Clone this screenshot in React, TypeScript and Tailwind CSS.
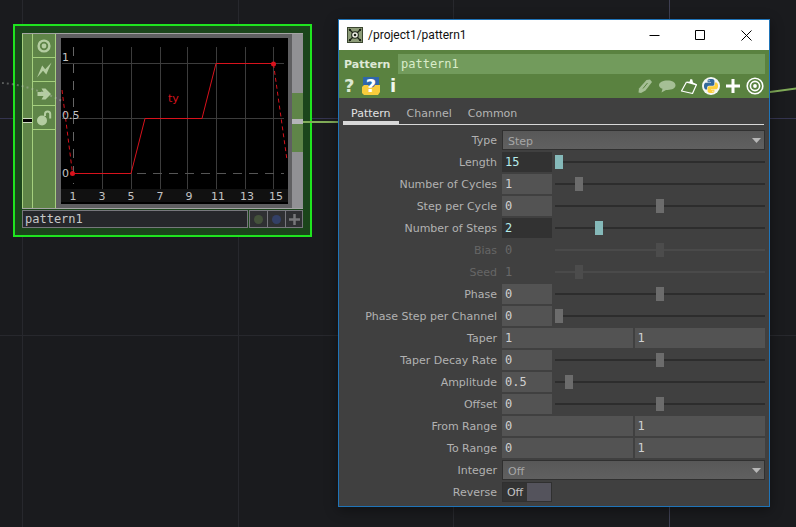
import React, { useState } from "react";

const PYTHON_HALF =
  "M14.25.18l.9.2.73.26.59.3.45.32.34.34.25.34.16.33.1.3.04.26.02.2-.01.13V8.5l-.05.63-.13.55-.21.46-.26.38-.3.31-.33.25-.35.19-.35.14-.33.1-.3.07-.26.04-.21.02H8.77l-.69.05-.59.14-.5.22-.41.27-.33.32-.27.35-.2.36-.15.37-.1.35-.07.32-.04.27-.02.21v3.06H3.17l-.21-.03-.28-.07-.32-.12-.35-.18-.36-.26-.36-.36-.35-.46-.32-.59-.28-.73-.21-.88-.14-1.05-.05-1.23.06-1.22.16-1.04.24-.87.32-.71.36-.57.4-.44.42-.33.42-.24.4-.16.36-.1.32-.05.24-.01h.16l.06.01h8.16v-.83H6.18l-.01-2.75-.02-.37.05-.34.11-.31.17-.28.25-.26.31-.23.38-.2.44-.18.51-.15.58-.12.64-.1.71-.06.77-.04.84-.02 1.27.05zm-6.3 1.98l-.23.33-.08.41.08.41.23.34.33.22.41.09.41-.09.33-.22.23-.34.08-.41-.08-.41-.23-.33-.33-.22-.41-.09-.41.09z";

const sans = "font-['DejaVu_Sans',sans-serif]";
const mono = "font-['DejaVu_Sans_Mono',monospace]";

/* ---------- network canvas ---------- */

function Grid() {
  return (
    <svg className="absolute inset-0 h-full w-full" aria-hidden="true">
      <g fill="#27282d">
        <rect x="22" y="0" width="1" height="100%" />
        <rect x="238" y="0" width="1" height="100%" />
        <rect x="453" y="0" width="1" height="100%" />
        <rect x="0" y="335" width="100%" height="1" />
      </g>
      <rect x="669" y="0" width="1" height="100%" fill="#3e3f52" />
      <rect x="0" y="118" width="100%" height="1" fill="#34344f" />
    </svg>
  );
}

function Wires() {
  return (
    <svg className="pointer-events-none absolute inset-0 h-full w-full" aria-hidden="true" fill="none">
      <path d="M2 83C20 84 42 91 62 101" stroke="#b9bdb9" strokeOpacity=".4" strokeWidth="2" strokeDasharray="2 3" />
      <path d="M303 122H560C640 122 700 104 770 92L800 88" stroke="#80ab58" strokeWidth="2" />
    </svg>
  );
}

const xTicks = [1, 3, 5, 7, 9, 11, 13, 15];

function Chart() {
  return (
    <svg width="227" height="166" viewBox="61 38 227 166" className="block shrink-0" role="img" aria-label="ty channel">
      <rect x="61" y="38" width="227" height="166" fill="#000" />
      <rect x="61" y="189" width="227" height="13" fill="#111" />
      <g stroke="#3c3c3c" shapeRendering="crispEdges">
        <path d="M102.500 47V189M131.500 47V189M160.500 47V189M187.500 47V189M216.500 47V189M245.500 47V189M273.500 47V189" />
        <path d="M62 63.500H284M62 118.500H284" />
        <path d="M73.500 47V184" stroke="#666" strokeDasharray="9 8" />
        <path d="M73 173.500H284" stroke="#555" strokeDasharray="9 7" />
      </g>
      <g stroke="#d8121c" fill="none">
        <path d="M73 173.500H131L145 118.500H202L216 63.500H273.500" />
        <path d="M62 90L72.500 173M273.500 64L287 160" strokeDasharray="4 3" strokeWidth="1" />
      </g>
      <circle cx="72.500" cy="173.500" r="2.500" fill="#d8121c" />
      <circle cx="273.500" cy="64" r="2.500" fill="#d8121c" />
      <g className={`${sans} text-[11px]`} fill="#c4c4c4">
        <text x="62" y="61">1</text>
        <text x="62" y="119">0.5</text>
        <text x="62" y="177">0</text>
        {xTicks.map((t, i) => (
          <text key={t} x={73 + i * 29} y="200" textAnchor="middle">
            {t}
          </text>
        ))}
        <text x="168" y="102" fill="#d8121c">
          ty
        </text>
      </g>
    </svg>
  );
}

function Flag({ label, children }: { label: string; children: React.ReactNode }) {
  return (
    <button type="button" aria-label={label} className="flex h-6 w-full items-center justify-center border-b border-[#a5cf7e]">
      <svg width="16" height="16" viewBox="0 0 16 16" fill="#b4cda1" aria-hidden="true">
        {children}
      </svg>
    </button>
  );
}

function OperatorNode() {
  return (
    <section
      aria-label="pattern1 operator"
      className="absolute top-6 left-[13px] w-[299px] border-2 border-[#1fe51f] bg-[#1b451b] p-[7px]"
    >
      <div className="flex h-[176px] border-y border-[#a4a4a4] bg-[#5f5f61]">
        <div className="flex w-[10px] flex-col border-l border-[#a5cf7e] bg-black">
          <div className="h-[85px] border-b border-[#cfdcc4] bg-[#5f8548]" />
          <div className="mt-[3px] flex-1 border-t border-[#cfdcc4] bg-[#5f8548]" />
        </div>
        <div className="w-6 border-x border-[#a5cf7e] bg-[#5f8548]">
          <Flag label="Viewer active">
            <circle cx="8" cy="8" r="5.400" fill="none" stroke="#b4cda1" strokeWidth="2.400" />
            <circle cx="8" cy="8" r="2.400" />
          </Flag>
          <Flag label="Clone immune">
            <path d="M1 15.500L6.200 3.500 9.200 7.200 15.500.5 10.300 12.500 7 8.800z" />
          </Flag>
          <Flag label="Bypass">
            <path d="M1.500 6h6L5.500 2.500h4L15 8l-5.500 5.500h-4l2-3.500h-6z" />
          </Flag>
          <Flag label="Lock">
            <circle cx="6" cy="10.500" r="5" />
            <path d="M9 6V4a2.600 2.600 0 0 1 5.200 0V8.500" fill="none" stroke="#b4cda1" strokeWidth="2" />
          </Flag>
        </div>
        <div className="flex-1 pt-1 pl-[5px]">
          <Chart />
        </div>
        <div className="flex w-[11px] flex-col bg-[#919194]">
          <div className="mt-[59px] h-[26px] bg-[#5f8548]" />
          <div className="h-[5px] bg-[#b5b5b8]" />
          <div className="h-7 bg-[#5f8548]" />
        </div>
      </div>
      <div className="mt-px flex h-[18px] gap-px">
        <input
          aria-label="Operator name"
          defaultValue="pattern1"
          className={`${mono} h-full min-w-0 flex-1 border border-[#77777d] bg-[#26272b] px-0.5 text-[12px] text-[#c8c8c8] outline-none`}
        />
        <div className="flex divide-x divide-[#77777d] border border-[#77777d] bg-[#2f3033]">
          <button type="button" aria-label="Display" className="flex w-[18px] items-center justify-center">
            <span className="size-[9px] rounded-full bg-[#44523b]" />
          </button>
          <button type="button" aria-label="Render" className="flex w-[18px] items-center justify-center">
            <span className="size-[9px] rounded-full bg-[#334066]" />
          </button>
          <button type="button" aria-label="Activate viewer" className="flex w-4 items-center justify-center">
            <svg width="11" height="11" viewBox="0 0 11 11" aria-hidden="true">
              <path d="M5.500 0v11M0 5.500h11" stroke="#77777a" strokeWidth="2.500" />
            </svg>
          </button>
        </div>
      </div>
    </section>
  );
}

/* ---------- parameter window ---------- */

function TitleBar() {
  return (
    <header className="flex h-[30px] items-center bg-white pl-2">
      <svg width="16" height="16" viewBox="0 0 16 16" aria-hidden="true">
        <rect width="16" height="16" fill="#3b4630" />
        <rect x="1" y="1" width="14" height="14" fill="#8d9c78" />
        <path d="M2 2l12 12M14 2L2 14" stroke="#1d2418" strokeWidth="1.400" />
        <path d="M2 2h2v2H2zM12 2h2v2h-2zM2 12h2v2H2zM12 12h2v2h-2z" fill="#1d2418" />
        <circle cx="8" cy="8" r="3.800" fill="#1d2418" />
        <circle cx="8" cy="8" r="2.800" fill="#f4f4ea" />
        <circle cx="8" cy="8" r="1.300" fill="#1d2418" />
      </svg>
      <h1 className="ml-[5px] flex-1 font-['Roboto',sans-serif] text-[12px] text-[#111]">/project1/pattern1</h1>
      <div className="flex h-full">
        {[
          ["Minimize", "M.500 5.500h10"],
          ["Maximize", "M.500.500h9v9h-9z"],
          ["Close", "M.500.500l10 10M10.500.500l-10 10"],
        ].map(([label, d]) => (
          <button key={label} type="button" aria-label={label} className="flex w-[46px] items-center justify-center">
            <svg width="11" height="11" viewBox="0 0 11 11" fill="none" stroke="#000" aria-hidden="true">
              <path d={d} />
            </svg>
          </button>
        ))}
      </div>
    </header>
  );
}

function PythonMark() {
  return (
    <>
      <path d={PYTHON_HALF} fill="#33699c" />
      <path d={PYTHON_HALF} fill="#fccf3c" transform="rotate(180 12 12)" />
    </>
  );
}

function Tool({ label, children }: { label: string; children: React.ReactNode }) {
  return (
    <button type="button" aria-label={label} className="size-[18px]">
      <svg width="18" height="18" viewBox="0 0 18 18" fill="none" aria-hidden="true">
        {children}
      </svg>
    </button>
  );
}

function OperatorHeader() {
  return (
    <div className="bg-[#5a8240] pt-1 pr-1 pb-[3px] pl-[5px]">
      <div className="flex h-5 items-center">
        <label htmlFor="op-name" className={`${sans} w-[54px] pt-0.5 text-[11px] font-bold text-[#dfe9d6]`}>
          Pattern
        </label>
        <input
          id="op-name"
          defaultValue="pattern1"
          className={`${mono} h-full min-w-0 flex-1 bg-[#729b5c] px-[3px] text-[12px] text-[#d9ecc9] outline-none`}
        />
      </div>
      <div className="mt-[3px] flex h-[18px] items-center">
        <button type="button" aria-label="Help" className={`${sans} w-[18px] text-left text-[18px] leading-[18px] font-bold text-[#dbe8d2]`}>
          ?
        </button>
        <button type="button" aria-label="Python help" className={`${sans} relative size-[18px] text-[18px] leading-[18px] font-bold text-white`}>
          <svg className="absolute inset-0" width="18" height="18" viewBox="0 0 18 18" aria-hidden="true">
            <path d="M1 0h16v11H1z" fill="#2f66ab" />
            <path d="M0 10l2-2h4l3 3 3-1.500 1-1.500h5v7l-2 3H2l-2-2z" fill="#f8cc3c" />
          </svg>
          <span className="relative">?</span>
        </button>
        <button type="button" aria-label="Info" className={`${sans} ml-1.5 w-[14px] text-center text-[18px] leading-[18px] font-bold text-[#f0f6ec]`}>
          i
        </button>
        <div className="ml-auto flex gap-1 pr-px">
          <Tool label="Edit">
            <path d="M10.500 3L14 2.500 16 5 9.500 13.500 5 16l-2.500-.5.500-4z" fill="#a5bf95" />
            <path d="M7 11.500l4.500-5.500" stroke="#5a8240" strokeWidth="1" />
          </Tool>
          <Tool label="Comment">
            <path d="M9.500 3.500c4.700 0 8 1.900 8 4.700s-3.300 4.700-8 4.700H8L3.500 15.500l1-3.700C2.300 11 1 9.800 1 8.200c0-2.800 3.800-4.700 8.500-4.700z" fill="#a5bf95" />
          </Tool>
          <Tool label="Tags">
            <path d="M6.500 5L1.500 14l11 2.500L16.500 7.500" stroke="#fff" strokeWidth="1.200" strokeLinejoin="round" />
            <path d="M6.500 4.500l3 .2L10.500 2l1.800.6.700 2.900 4 1.700-.5 1.200-7-1.800-3-.8z" fill="#fff" />
          </Tool>
          <Tool label="Python">
            <circle cx="9" cy="9" r="9" fill="#f4f6f4" />
            <g transform="translate(2 2) scale(.583)">
              <PythonMark />
            </g>
          </Tool>
          <Tool label="Add parameter">
            <path d="M9 2v14M2 9h14" stroke="#fff" strokeWidth="3" />
          </Tool>
          <Tool label="Viewer">
            <circle cx="9" cy="9" r="7.800" stroke="#fff" strokeWidth="1.600" />
            <circle cx="9" cy="9" r="4.600" stroke="#fff" strokeWidth="1.600" />
            <circle cx="9" cy="9" r="1.900" fill="#fff" />
          </Tool>
        </div>
      </div>
    </div>
  );
}

function Tabs() {
  const [active, setActive] = useState("Pattern");
  return (
    <div role="tablist" className="mr-[5px] ml-1 flex h-[27px] border-b border-[#d8d8d8]">
      {["Pattern", "Channel", "Common"].map((t) => (
        <button
          key={t}
          type="button"
          role="tab"
          aria-selected={t === active}
          onClick={() => setActive(t)}
          className={`${sans} border-b-3 px-2 pt-2 text-[11px] ${
            t === active ? "border-[#d8d8d8] text-[#e2e2e2]" : "border-transparent text-[#b4b4b4]"
          }`}
        >
          {t}
        </button>
      ))}
    </div>
  );
}

type Param =
  | { kind: "menu"; label: string; value: string; options: string[] }
  | { kind: "slider"; label: string; value: string; min: number; max: number; pos: number; changed?: boolean; disabled?: boolean }
  | { kind: "pair"; label: string; values: [string, string] }
  | { kind: "toggle"; label: string };

const params: Param[] = [
  { kind: "menu", label: "Type", value: "Step", options: ["Step"] },
  { kind: "slider", label: "Length", value: "15", min: 0, max: 1, pos: 0, changed: true },
  { kind: "slider", label: "Number of Cycles", value: "1", min: 0, max: 10, pos: 1 },
  { kind: "slider", label: "Step per Cycle", value: "0", min: -1, max: 1, pos: 0 },
  { kind: "slider", label: "Number of Steps", value: "2", min: 0, max: 10, pos: 2, changed: true },
  { kind: "slider", label: "Bias", value: "0", min: -1, max: 1, pos: 0, disabled: true },
  { kind: "slider", label: "Seed", value: "1", min: 0, max: 10, pos: 1, disabled: true },
  { kind: "slider", label: "Phase", value: "0", min: -1, max: 1, pos: 0 },
  { kind: "slider", label: "Phase Step per Channel", value: "0", min: 0, max: 1, pos: 0 },
  { kind: "pair", label: "Taper", values: ["1", "1"] },
  { kind: "slider", label: "Taper Decay Rate", value: "0", min: -1, max: 1, pos: 0 },
  { kind: "slider", label: "Amplitude", value: "0.5", min: 0, max: 10, pos: 0.5 },
  { kind: "slider", label: "Offset", value: "0", min: -1, max: 1, pos: 0 },
  { kind: "pair", label: "From Range", values: ["0", "1"] },
  { kind: "pair", label: "To Range", values: ["0", "1"] },
  { kind: "menu", label: "Integer", value: "Off", options: ["Off"] },
  { kind: "toggle", label: "Reverse" },
];

const field = `${mono} h-5 min-w-0 px-[3px] text-[12px] outline-none`;

function Control({ p, id }: { p: Param; id: string }) {
  if (p.kind === "menu") {
    return (
      <div className="relative flex-1">
        <select
          id={id}
          defaultValue={p.value}
          className={`${sans} block h-5 w-full appearance-none border border-[#303030] bg-linear-to-b from-[#585858] to-[#606060] px-[5px] pt-[3px] text-[11px] text-[#a6a6a6] outline-none`}
        >
          {p.options.map((o) => (
            <option key={o}>{o}</option>
          ))}
        </select>
        <svg className="pointer-events-none absolute top-[8px] right-1" width="9" height="5" viewBox="0 0 9 5" aria-hidden="true">
          <path d="M0 0h9L4.500 5z" fill="#b8b8b8" />
        </svg>
      </div>
    );
  }
  if (p.kind === "slider") {
    const fieldTone = p.disabled
      ? "bg-transparent text-[#686868]"
      : p.changed
        ? "bg-[#323232] text-[#b5ecec]"
        : "bg-[#535353] text-[#d0d0d0]";
    const thumb = p.disabled
      ? "[&::-webkit-slider-thumb]:bg-[#4c4c4c]"
      : p.changed
        ? "[&::-webkit-slider-thumb]:bg-[#85b9b9]"
        : "[&::-webkit-slider-thumb]:bg-[#6c6c6c]";
    const track = p.disabled
      ? "[&::-webkit-slider-runnable-track]:bg-[#4a4a4a]"
      : "[&::-webkit-slider-runnable-track]:bg-[#2d2d2d]";
    return (
      <>
        <input id={id} defaultValue={p.value} disabled={p.disabled} className={`${field} w-[50px] ${fieldTone}`} />
        <input
          type="range"
          aria-label={`${p.label} slider`}
          min={p.min}
          max={p.max}
          step="any"
          defaultValue={p.pos}
          disabled={p.disabled}
          className={`ml-px h-5 min-w-0 flex-1 appearance-none bg-transparent [&::-webkit-slider-runnable-track]:h-[2px] [&::-webkit-slider-thumb]:-mt-[6px] [&::-webkit-slider-thumb]:h-[14px] [&::-webkit-slider-thumb]:w-2 [&::-webkit-slider-thumb]:appearance-none ${track} ${thumb}`}
        />
      </>
    );
  }
  if (p.kind === "pair") {
    return (
      <>
        {p.values.map((v, i) => (
          <input
            key={i}
            id={i === 0 ? id : undefined}
            aria-label={i === 0 ? undefined : `${p.label} second value`}
            defaultValue={v}
            className={`${field} flex-1 bg-[#535353] text-[#d0d0d0]`}
          />
        ))}
      </>
    );
  }
  return (
    <label className="relative flex h-5 w-[50px] cursor-pointer border border-[#303030] bg-[#333]">
      <input id={id} type="checkbox" className="peer absolute inset-0 size-full appearance-none" />
      <span className={`${sans} flex-1 text-center text-[11px] leading-5 text-[#c4c4c4]`}>Off</span>
      <span className="w-6 bg-[#54535c]" />
    </label>
  );
}

function ParameterWindow() {
  return (
    <main className="absolute top-[19px] left-[338px] w-[432px] border border-[#1f74b8] bg-[#404040] shadow-[0_3px_12px_rgba(0,0,0,0.4)]">
      <TitleBar />
      <OperatorHeader />
      <Tabs />
      <form className="flex flex-col gap-0.5 pt-[5px] pr-1 pb-1">
        {params.map((p, i) => {
          const id = `param-${i}`;
          const dim = p.kind === "slider" && p.disabled;
          return (
            <div key={p.label} className="flex items-center gap-[5px]">
              <label
                htmlFor={id}
                className={`${sans} h-5 w-[158px] text-right text-[11px] leading-[22px] whitespace-nowrap ${dim ? "text-[#666]" : "text-[#b2b2b2]"}`}
              >
                {p.label}
              </label>
              <div className="flex min-w-0 flex-1 gap-0.5">
                <Control p={p} id={id} />
              </div>
            </div>
          );
        })}
      </form>
    </main>
  );
}

export default function App() {
  return (
    <div className="relative min-h-screen w-full overflow-hidden bg-[#1a1b1e]">
      <Grid />
      <OperatorNode />
      <Wires />
      <ParameterWindow />
    </div>
  );
}
